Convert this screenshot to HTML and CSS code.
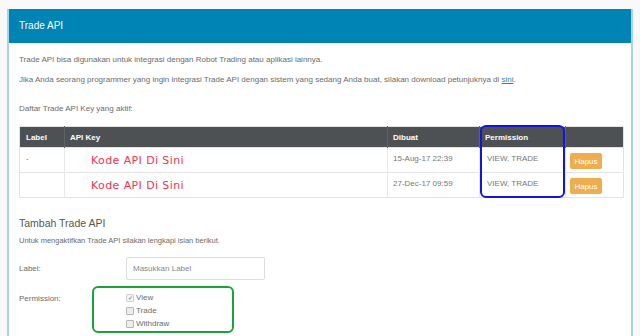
FILE: index.html
```html
<!DOCTYPE html>
<html lang="en">
<head>
    <meta charset="UTF-8">
    <title>Trade API</title>
    <link rel="stylesheet" href="styles.css">
</head>
<body>
    <div class="panel">
        <div class="panel-heading">Trade API</div>
        <div class="panel-body">
            <p class="intro">Trade API bisa digunakan untuk integrasi dengan Robot Trading atau aplikasi lainnya.</p>
            <p class="intro">Jika Anda seorang programmer yang ingin integrasi Trade API dengan sistem yang sedang Anda buat, silakan download petunjuknya di <a href="#">sini</a>.</p>
            <p class="list-title">Daftar Trade API Key yang aktif:</p>

            <div class="table-wrap">
                <table class="key-table">
                    <thead>
                        <tr>
                            <th class="col-label">Label</th>
                            <th class="col-key">API Key</th>
                            <th class="col-date">Dibuat</th>
                            <th class="col-perm">Permission</th>
                            <th class="col-act"></th>
                        </tr>
                    </thead>
                    <tbody>
                        <tr>
                            <td>-</td>
                            <td><span class="api-key">Kode API Di Sini</span></td>
                            <td>15-Aug-17 22:39</td>
                            <td class="perm">VIEW, TRADE</td>
                            <td class="act"><button class="btn-hapus">Hapus</button></td>
                        </tr>
                        <tr>
                            <td></td>
                            <td><span class="api-key">Kode API Di Sini</span></td>
                            <td>27-Dec-17 09:59</td>
                            <td class="perm">VIEW, TRADE</td>
                            <td class="act"><button class="btn-hapus">Hapus</button></td>
                        </tr>
                    </tbody>
                </table>
                <div class="mark mark-blue"></div>
            </div>

            <h3 class="section-title">Tambah Trade API</h3>
            <p class="section-note">Untuk mengaktifkan Trade API silakan lengkapi isian berikut.</p>

            <div class="form-row form-row-label">
                <label class="form-label" for="label">Label:</label>
                <input type="text" id="label" class="form-input" placeholder="Masukkan Label">
            </div>
            <div class="form-row form-row-perm">
                <span class="form-label">Permission:</span>
                <div class="checks">
                    <div class="check"><span class="box checked">&#10003;</span>View</div>
                    <div class="check"><span class="box"></span>Trade</div>
                    <div class="check"><span class="box"></span>Withdraw</div>
                </div>
                <div class="mark mark-green"></div>
            </div>
        </div>
    </div>
</body>
</html>
```

FILE: styles.css
```css
body { margin: 0; background-color: #f9f9f9; font-family: "Liberation Sans", Arial, sans-serif; color: #6b6b6b; overflow: hidden; }
.panel { margin: 9px 0 0 7px; width: 622px; height: 327px; overflow: hidden; background-color: #fff; border-left: 2px solid #a9d3e6; border-right: 2px solid #a9d3e6; }
.panel-heading { margin-left: -2px; height: 34px; line-height: 33px; padding-left: 12px; background-color: #0083b5; color: #fff; font-size: 10px; }
.panel-body { padding: 12px 7px 0 10px; position: relative; }
.intro { margin: 0 0 10px; font-size: 8px; line-height: 10px; }
.intro a { color: #1a8bb8; }
.list-title { margin: 19px 0 12px; font-size: 8px; line-height: 10px; }
.table-wrap { position: relative; }
.key-table { width: 605px; table-layout: fixed; border-collapse: collapse; font-size: 8px; border: 1px solid #e3e3e3; }
.key-table th { box-sizing: border-box; height: 21px; padding: 0 0 0 5px; background-color: #4e5153; color: #fff; font-weight: bold; text-align: left; border-left: 1px solid #5f6264; }
.key-table th:first-child { border-left: none; padding-left: 6px; }
.key-table td { height: 18px; padding: 6px 0 0 5px; border-top: 1px solid #e3e3e3; border-left: 1px solid #e8e8e8; vertical-align: top; color: #777; }
.key-table td:first-child { border-left: none; padding-left: 6px; }
.key-table td.perm { padding-left: 7px; }
.key-table td.act { padding-left: 4px; }
.col-label { width: 45px; }
.col-key { width: 323px; }
.col-date { width: 92px; }
.col-perm { width: 86px; }
.api-key { display: inline-block; margin: 0 0 0 21px; font-family: "DejaVu Sans", sans-serif; font-size: 11px; letter-spacing: 0.4px; color: #f2334f; }
.btn-hapus { margin-top: -1px; width: 32px; height: 16px; padding: 0; border: none; border-radius: 2px; background-color: #f0ad4e; color: #fff; font-family: "Liberation Sans", Arial, sans-serif; font-size: 8px; }
.mark { position: absolute; border-radius: 6px; }
.mark-blue { left: 461px; top: -1px; width: 81px; height: 69px; border: 2px solid #1414e0; }
.section-title { margin: 18px 0 6px; font-size: 10.5px; line-height: 14px; font-weight: normal; color: #555; }
.section-note { margin: 0 0 11px; font-size: 7.5px; line-height: 10px; }
.form-row { display: flex; position: relative; font-size: 8px; }
.form-row-label { align-items: center; margin-bottom: 11px; }
.form-label { width: 107px; flex-shrink: 0; }
.form-input { width: 139px; height: 23px; box-sizing: border-box; padding: 0 6px; border: 1px solid #ddd; border-radius: 2px; font-family: "Liberation Sans", Arial, sans-serif; font-size: 8px; color: #555; }
.form-input::placeholder { color: #888; }
.form-row-perm .form-label { padding-top: 3px; }
.checks { display: flex; flex-direction: column; }
.check { display: flex; align-items: center; height: 13px; gap: 2px; }
.box { width: 6px; height: 6px; border: 1px solid #b5b5b5; border-radius: 1px; background-color: #ededed; font-size: 6px; line-height: 6px; text-align: center; color: #666; }
.box.checked { background-color: #f4f4f4; border-color: #d0d0d0; }
.mark-green { left: 73px; top: -5px; width: 138px; height: 43px; border: 2px solid #1aa33c; }
```
